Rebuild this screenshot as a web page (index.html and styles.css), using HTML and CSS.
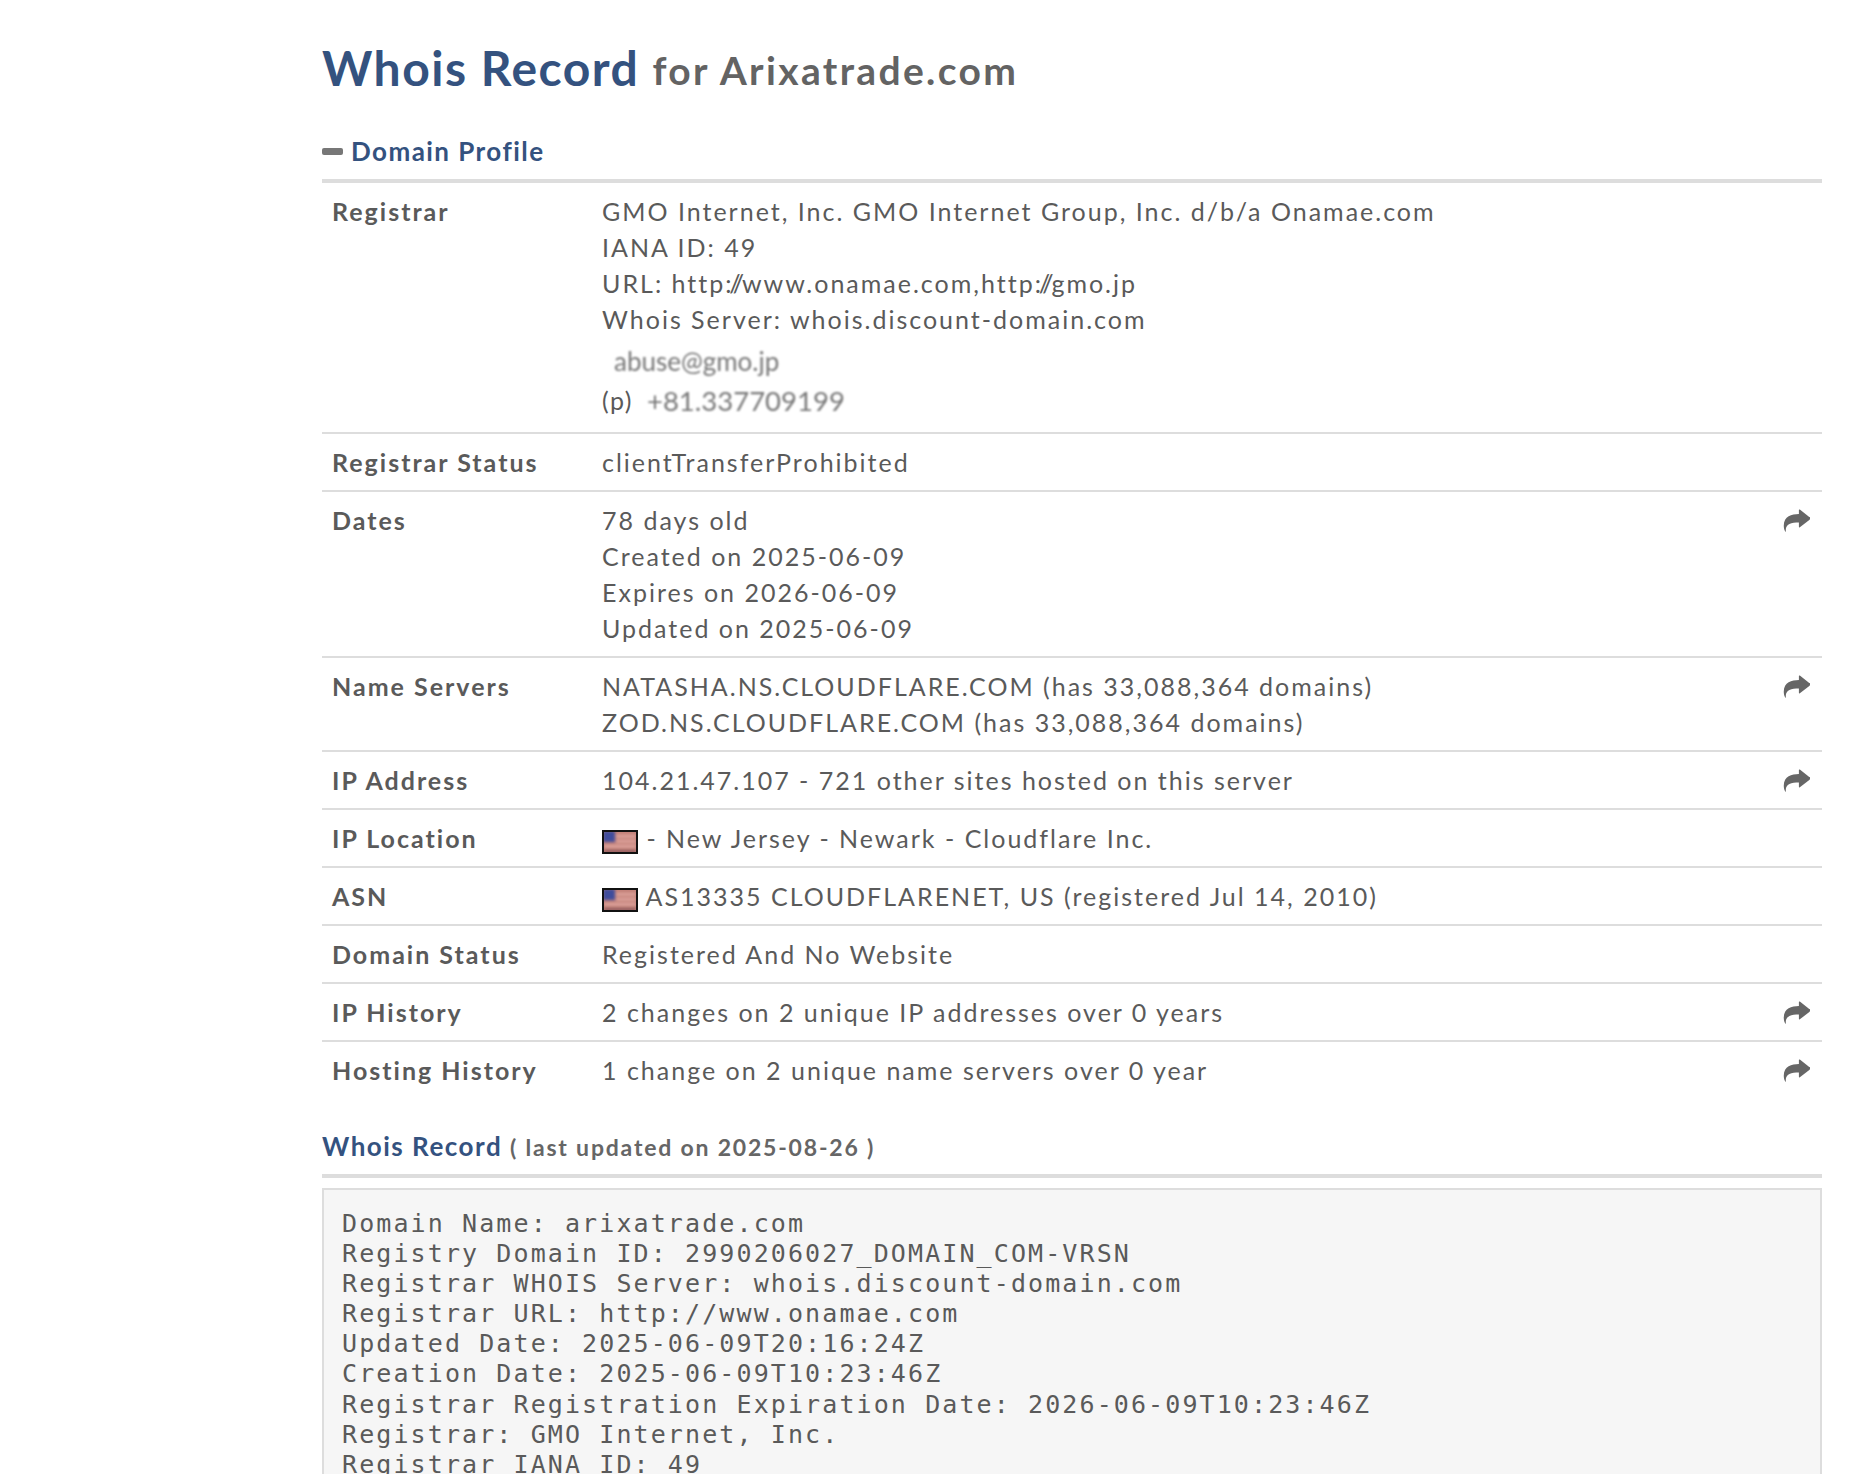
FILE: index.html
```html
<!DOCTYPE html>
<html lang="en">
<head>
<meta charset="utf-8">
<title>Whois Record for Arixatrade.com</title>
<link rel="stylesheet" href="styles.css">
</head>
<body>
<svg class="defs" width="0" height="0" aria-hidden="true">
  <symbol id="share" viewBox="0 0 28 24"><path d="M27.300 8.300 17.500.6c-.5-.4-1-.1-1 .5v4.200C9 5.600.8 7.500.7 17.500c0 2.200.6 4.600 1.500 5.900.3.400.8.300.7-.2-.4-3.500.8-6 3.700-7.500 2.600-1.300 6-1.500 9.900-1.500v4.400c0 .6.500.9 1 .5l10.200-7.900c.5-.4.600-2.500.1-2.900z"/></symbol>
  <symbol id="flag" viewBox="0 0 36 24"><rect width="36" height="24" fill="#111"/><svg x="2" y="2" width="32" height="20" viewBox="0 0 32 20"><rect width="32" height="20" fill="#c4827a"/><g class="flag-art"><path d="M12 3h20v2.500H12zM12 8h20v2.500H12zM0 13h32v2.500H0z" fill="#e0a7a0"/><path d="M0 18h32v3H0z" fill="#8f5a5c"/><rect x="-1" y="-1" width="12" height="11" fill="#3f4c9c"/></g></svg></symbol>
</svg>
<main class="page">
  <h1 class="title"><span class="title-main">Whois Record</span> <small class="title-sub">for Arixatrade.com</small></h1>
  <h2 class="section-head"><span class="minus"></span>Domain Profile</h2>
  <div class="profile">
    <div class="row">
      <div class="label">Registrar</div>
      <div class="value">
        <div>GMO Internet, Inc. GMO Internet Group, Inc. d/b/a Onamae.com</div>
        <div>IANA ID: 49</div>
        <div>URL: http<span class="tight">://</span>www.onamae.com,http<span class="tight">://</span>gmo.jp</div>
        <div>Whois Server: whois.discount-domain.com</div>
        <div class="contact-mail"><span class="blurred">abuse@gmo.jp</span></div>
        <div class="contact-phone"><span class="phone-tag">(p)</span><span class="blurred phone">+81.337709199</span></div>
      </div>
    </div>
    <div class="row">
      <div class="label">Registrar Status</div>
      <div class="value">clientTransferProhibited</div>
    </div>
    <div class="row">
      <div class="label">Dates</div>
      <div class="value">
        <div>78 days old</div>
        <div>Created on 2025-06-09</div>
        <div>Expires on 2026-06-09</div>
        <div>Updated on 2025-06-09</div>
      </div>
      <svg class="share"><use href="#share"/></svg>
    </div>
    <div class="row">
      <div class="label">Name Servers</div>
      <div class="value">
        <div>NATASHA.NS.CLOUDFLARE.COM (has 33,088,364 domains)</div>
        <div>ZOD.NS.CLOUDFLARE.COM (has 33,088,364 domains)</div>
      </div>
      <svg class="share"><use href="#share"/></svg>
    </div>
    <div class="row">
      <div class="label">IP Address</div>
      <div class="value">104.21.47.107 - 721 other sites hosted on this server</div>
      <svg class="share"><use href="#share"/></svg>
    </div>
    <div class="row">
      <div class="label">IP Location</div>
      <div class="value"><svg class="flag"><use href="#flag"/></svg> - New Jersey - Newark - Cloudflare Inc.</div>
    </div>
    <div class="row">
      <div class="label">ASN</div>
      <div class="value"><svg class="flag"><use href="#flag"/></svg> AS13335 CLOUDFLARENET, US (registered Jul 14, 2010)</div>
    </div>
    <div class="row">
      <div class="label">Domain Status</div>
      <div class="value">Registered And No Website</div>
    </div>
    <div class="row">
      <div class="label">IP History</div>
      <div class="value">2 changes on 2 unique IP addresses over 0 years</div>
      <svg class="share"><use href="#share"/></svg>
    </div>
    <div class="row">
      <div class="label">Hosting History</div>
      <div class="value">1 change on 2 unique name servers over 0 year</div>
      <svg class="share"><use href="#share"/></svg>
    </div>
  </div>
  <h2 class="record-head">Whois Record <small class="record-note">( last updated on 2025-08-26 )</small></h2>
  <pre class="raw">Domain Name: arixatrade.com
Registry Domain ID: 2990206027_DOMAIN_COM-VRSN
Registrar WHOIS Server: whois.discount-domain.com
Registrar URL: http://www.onamae.com
Updated Date: 2025-06-09T20:16:24Z
Creation Date: 2025-06-09T10:23:46Z
Registrar Registration Expiration Date: 2026-06-09T10:23:46Z
Registrar: GMO Internet, Inc.
Registrar IANA ID: 49</pre>
</main>
</body>
</html>
```

FILE: styles.css
```css
html, body { margin: 0; padding: 0; background: #fff; }
body { height: 1474px; overflow: hidden; font-family: Lato, "Open Sans", sans-serif; color: #5a5a5a; }
.defs { display: block; height: 0; }
.page { margin-left: 322px; width: 1500px; display: flow-root; }
.title { margin: 38px 0 0; font-weight: 700; line-height: 60px; font-size: 48px; letter-spacing: 1.5px; }
.title-main { color: #34527f; }
.title-sub { font-size: 39px; color: #636363; letter-spacing: 2.350px; vertical-align: 1px; }
.section-head { margin: 31px 0 0; height: 40px; line-height: 40px; font-size: 26px; font-weight: 700; color: #34527f; letter-spacing: 1.45px; display: flex; align-items: center; padding-bottom: 8px; border-bottom: 4px solid #ddd; }
.minus { width: 21px; height: 7px; border-radius: 2px; background: #777; margin-right: 8px; }
.row { display: flex; align-items: flex-start; padding: 10px; border-bottom: 2px solid #ddd; font-size: 25px; line-height: 36px; letter-spacing: 2px; }
.row:last-child { border-bottom: 0; }
.label { width: 270px; flex: none; font-weight: 700; }
.value { flex: 1; }
.tight { letter-spacing: -2.200px; }
.contact-mail { padding: 6px 0 0 12px; line-height: 36px; }
.contact-phone { line-height: 43px; display: flex; gap: 14px; }
.blurred { filter: blur(.9px); color: #777; letter-spacing: 0; }
.contact-mail .blurred { font-size: 26px; }
.phone { font-size: 27.500px; }
.phone-tag { letter-spacing: 1.500px; }
.share { width: 27px; height: 23px; fill: #666; flex: none; margin: 7px 2px 0 -1px; }
.flag { width: 36px; height: 24px; vertical-align: -6px; }
.flag-art { filter: blur(1.500px); }
.record-head { margin: 28px 0 0; font-size: 26px; line-height: 40px; font-weight: 700; color: #34527f; letter-spacing: 1.5px; padding-bottom: 7px; border-bottom: 4px solid #ddd; }
.record-note { font-size: 23px; color: #666; letter-spacing: 1.8px; }
.raw { margin: 10px 0 0; padding: 19px 18px; background: #f6f6f6; border: 2px solid #ddd; font-family: "DejaVu Sans Mono", monospace; font-size: 25px; line-height: 30.100px; letter-spacing: 2.1px; color: #5a5a5a; }
```
